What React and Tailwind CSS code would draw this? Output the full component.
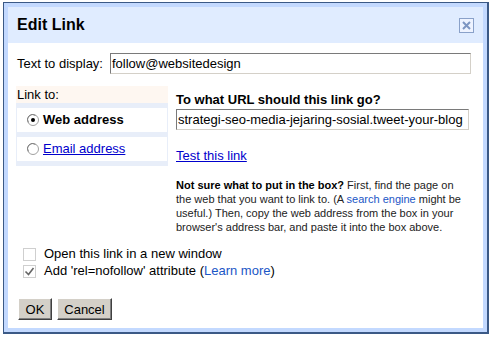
import React from "react";

function Radio({ checked }) {
  return (
    <svg width="12" height="12" viewBox="0 0 12 12" className="shrink-0">
      <circle cx="6" cy="6" r="5.5" fill="#fff" stroke="#a0a0a0" />
      <path d="M1.5 8.5A5 5 0 0 1 8.5 1.5" fill="none" stroke="#808080" />
      {checked && <circle cx="6" cy="6" r="2" fill="#000" />}
    </svg>
  );
}

function Check({ checked }) {
  return (
    <div className="w-[13px] h-[13px] shrink-0 border border-[#cfcfcf] bg-white flex items-center justify-center">
      {checked && (
        <svg width="11" height="11" viewBox="0 0 11 11">
          <path d="M1.5 5.5l3 3 5-6.5" fill="none" stroke="#666" strokeWidth="1.6" />
        </svg>
      )}
    </div>
  );
}

function Btn({ children, w }) {
  return (
    <button
      className={`${w} h-[22px] bg-[#d4d0c8] border-t border-l border-t-white border-l-white border-r border-b border-r-[#404040] border-b-[#404040] shadow-[inset_-1px_-1px_0_#808080] text-[13px] text-black leading-none`}
    >
      {children}
    </button>
  );
}

export default function App() {
  return (
    <div className="w-[491px] h-[340px] bg-white pt-[2px] pl-[3px] font-['Liberation_Sans',Arial,sans-serif] text-black">
      <div className="w-[486px] h-[332px] border-l border-t border-r-2 border-b-2 border-[#3b5986] bg-[#c3d9ff] p-[4px] flex flex-col">
        <div className="h-[36px] bg-[#e0ecff] flex items-center justify-between pl-[9px] pr-[9px]">
          <span className="text-[16px] font-bold">Edit Link</span>
          <svg width="15" height="15" viewBox="0 0 15 15">
            <rect x="0.5" y="0.5" width="14" height="14" fill="#eef3ff" stroke="#8aa1c9" />
            <path d="M4 4l7 7M11 4l-7 7" stroke="#7d95c2" strokeWidth="2" />
          </svg>
        </div>
        <div className="flex-1 bg-white flex flex-col">
          <div className="flex items-center pt-[10px] pl-[9px] pr-[12px]">
            <span className="text-[13px] w-[93px]">Text to display:</span>
            <div className="flex-1 h-[21px] border border-t-[#7a7a7a] border-l-[#7a7a7a] border-r-[#d4d0c8] border-b-[#d4d0c8] flex items-center px-[1px] text-[13px]">
              follow@websitedesign
            </div>
          </div>

          <div className="flex mt-[12px] pl-[8px]">
            <div className="w-[152px]">
              <div className="h-[17px] bg-[#fef7f1] flex items-center pl-[1px] text-[13px]">Link to:</div>
              <div className="bg-[#e8eef9] px-[1px] py-[5px] flex flex-col gap-[5px]">
                <div className="h-[24px] bg-white flex items-center pl-[10px] gap-[4px]">
                  <Radio checked />
                  <span className="text-[13px] font-bold">Web address</span>
                </div>
                <div className="h-[24px] bg-white flex items-center pl-[10px] gap-[4px]">
                  <Radio />
                  <a className="text-[13px] text-[#0000cc] underline">Email address</a>
                </div>
              </div>
            </div>
            <div className="ml-[8px] w-[293px] pt-[6px]">
              <div className="text-[13px] font-bold leading-[15px]">To what URL should this link go?</div>
              <div className="mt-[2px] h-[21px] border border-t-[#7a7a7a] border-l-[#7a7a7a] border-r-[#d4d0c8] border-b-[#d4d0c8] flex items-center px-[1px] text-[13px] whitespace-nowrap overflow-hidden">
                strategi-seo-media-jejaring-sosial.tweet-your-blog
              </div>
              <div className="mt-[17px] leading-[15px]">
                <a className="text-[13px] text-[#0000cc] underline">Test this link</a>
              </div>
              <p className="mt-[15px] text-[11px] leading-[14px] text-[#222]">
                <b className="text-black">Not sure what to put in the box?</b> First, find the page on the web that
                you want to link to. (A <span className="text-[#1a56c6]">search engine</span> might be useful.) Then,
                copy the web address from the box in your browser's address bar, and paste it into the box above.
              </p>
            </div>
          </div>

          <div className="mt-[12px] pl-[15px] flex flex-col gap-[1px] text-[13px]">
            <div className="h-[16px] flex items-center gap-[8px]">
              <Check />
              <span>Open this link in a new window</span>
            </div>
            <div className="h-[16px] flex items-center gap-[8px]">
              <Check checked />
              <span>
                Add 'rel=nofollow' attribute (<span className="text-[#1a56c6]">Learn more</span>)
              </span>
            </div>
          </div>

          <div className="mt-[19px] pl-[10px] flex gap-[5px]">
            <Btn w="w-[34px]">OK</Btn>
            <Btn w="w-[55px]">Cancel</Btn>
          </div>
        </div>
      </div>
    </div>
  );
}
